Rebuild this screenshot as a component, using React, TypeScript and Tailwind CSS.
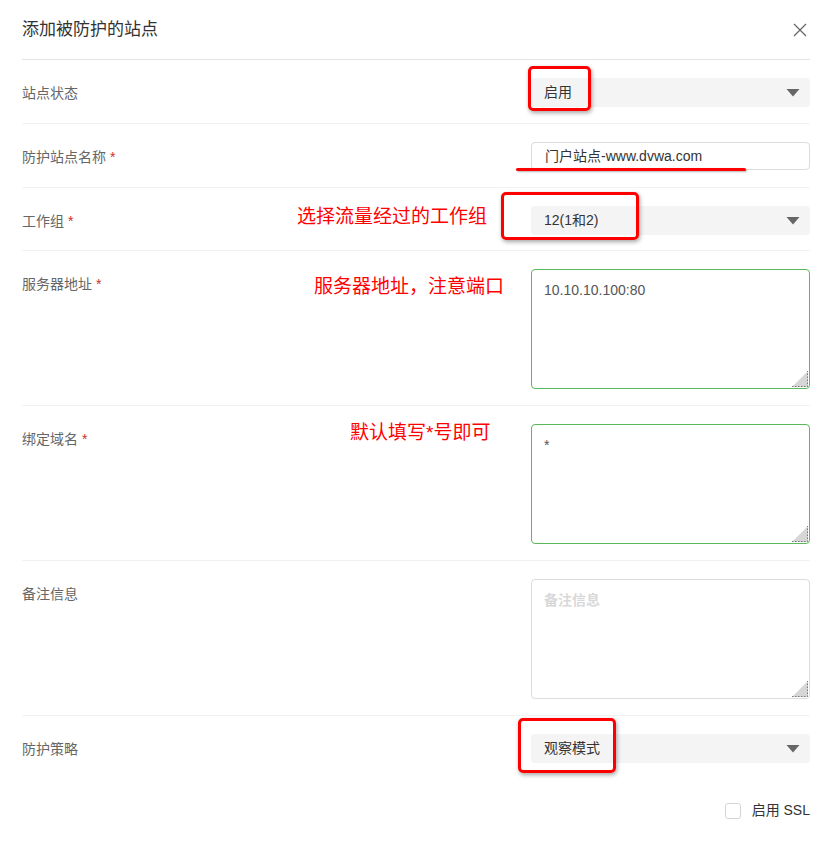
const font = { fontFamily: '"Liberation Sans", "Noto Sans CJK SC", sans-serif' };

function Label({ text, required }: { text: string; required?: boolean }) {
  return (
    <span className="text-[14px] leading-[20px] text-[#666]">
      {text}
      {required && <span className="ml-[4px] text-[#c9302c]">*</span>}
    </span>
  );
}

function Select({ value }: { value: string }) {
  return (
    <div className="flex h-[29px] w-[279px] items-center justify-between rounded-[4px] bg-[#f4f4f4] pl-[13px] pr-[10px]">
      <span className="text-[14px] text-[#333]">{value}</span>
      <svg width="14" height="9" viewBox="0 0 14 9">
        <path d="M0.5 1 L13.5 1 L7 8.5 Z" fill="#666" />
      </svg>
    </div>
  );
}

function ResizeGrip() {
  return (
    <svg className="absolute bottom-[1px] right-[1px]" width="18" height="18" viewBox="0 0 18 18">
      <path d="M18 2 L18 18 L2 18 Z" fill="#d6d6d6" />
      <path d="M2 17.5 L17.5 17.5 L17.5 2" stroke="#777" strokeWidth="1" strokeDasharray="1.5 1.5" fill="none" />
    </svg>
  );
}

function Area({ value, placeholder, green }: { value?: string; placeholder?: string; green?: boolean }) {
  return (
    <div
      className={`relative h-[120px] w-[279px] rounded-[4px] border px-[12px] pt-[8px] ${
        green ? "border-[#5cb85c]" : "border-[#dcdcdc]"
      }`}
    >
      {value ? (
        <span className="text-[14px] text-[#555]">{value}</span>
      ) : (
        <span className="text-[14px] font-bold text-[#d8d8d8]">{placeholder}</span>
      )}
      <ResizeGrip />
    </div>
  );
}

function Row({ children, last, tight }: { children: React.ReactNode; last?: boolean; tight?: boolean }) {
  return (
    <div
      className={`flex items-start pt-[18px] ${tight ? "pb-[15px]" : "pb-[16px]"} ${
        last ? "" : "border-b border-[#f2f2f2]"
      }`}
    >
      {children}
    </div>
  );
}

export default function App() {
  return (
    <div className="relative h-[866px] w-[830px] bg-white" style={font}>
      {/* Header */}
      <div className="ml-[22px] mr-[20px] flex h-[60px] items-center justify-between border-b border-[#e3e3e3]">
        <span className="text-[17px] text-[#333]">添加被防护的站点</span>
        <svg width="14" height="14" viewBox="0 0 14 14" className="mr-[3px]">
          <path d="M1 1 L13 13 M13 1 L1 13" stroke="#666" strokeWidth="1.3" />
        </svg>
      </div>

      <div className="ml-[22px] mr-[20px] flex flex-col">
        <Row>
          <div className="flex h-[29px] flex-1 items-center">
            <Label text="站点状态" />
          </div>
          <Select value="启用" />
        </Row>

        <Row>
          <div className="flex h-[29px] flex-1 items-center">
            <Label text="防护站点名称" required />
          </div>
          <div className="flex h-[28px] w-[279px] items-center rounded-[4px] border border-[#dcdcdc] px-[13px]">
            <span className="text-[14px] text-[#333]">门户站点-www.dvwa.com</span>
          </div>
        </Row>

        <Row tight>
          <div className="flex h-[29px] flex-1 items-center">
            <Label text="工作组" required />
          </div>
          <Select value="12(1和2)" />
        </Row>

        <Row>
          <div className="flex-1 pt-[3px]">
            <Label text="服务器地址" required />
          </div>
          <Area value="10.10.10.100:80" green />
        </Row>

        <Row>
          <div className="flex-1 pt-[3px]">
            <Label text="绑定域名" required />
          </div>
          <Area value="*" green />
        </Row>

        <Row>
          <div className="flex-1 pt-[3px]">
            <Label text="备注信息" />
          </div>
          <Area placeholder="备注信息" />
        </Row>

        <Row last>
          <div className="flex h-[29px] flex-1 items-center">
            <Label text="防护策略" />
          </div>
          <Select value="观察模式" />
        </Row>

        <div className="mt-[21px] flex items-center justify-end gap-[11px]">
          <div className="h-[16px] w-[16px] rounded-[3px] border border-[#d5d5d5] bg-white" />
          <span className="text-[14px] text-[#333]">启用 SSL</span>
        </div>
      </div>

      {/* Annotations */}
      <div className="pointer-events-none absolute left-[528px] top-[66px] h-[45px] w-[63px] rounded-[5px] border-[3px] border-[#f00] shadow-[1px_2px_4px_rgba(0,0,0,0.35)]" />
      <div className="pointer-events-none absolute left-[516px] top-[168px] h-[3px] w-[230px] rounded-full bg-[#f00] shadow-[1px_1px_2px_rgba(0,0,0,0.3)]" />
      <div className="pointer-events-none absolute left-[501px] top-[192px] h-[48px] w-[138px] rounded-[5px] border-[3px] border-[#f00] shadow-[1px_2px_4px_rgba(0,0,0,0.35)]" />
      <div className="pointer-events-none absolute left-[518px] top-[718px] h-[55px] w-[98px] rounded-[5px] border-[3px] border-[#f00] shadow-[1px_2px_4px_rgba(0,0,0,0.35)]" />

      <span className="absolute left-[297px] top-[205px] text-[19px] leading-[24px] text-[#f00]">选择流量经过的工作组</span>
      <span className="absolute left-[314px] top-[275px] text-[19px] leading-[24px] text-[#f00]">服务器地址，注意端口</span>
      <span className="absolute left-[350px] top-[421px] text-[19px] leading-[24px] text-[#f00]">默认填写*号即可</span>
    </div>
  );
}
